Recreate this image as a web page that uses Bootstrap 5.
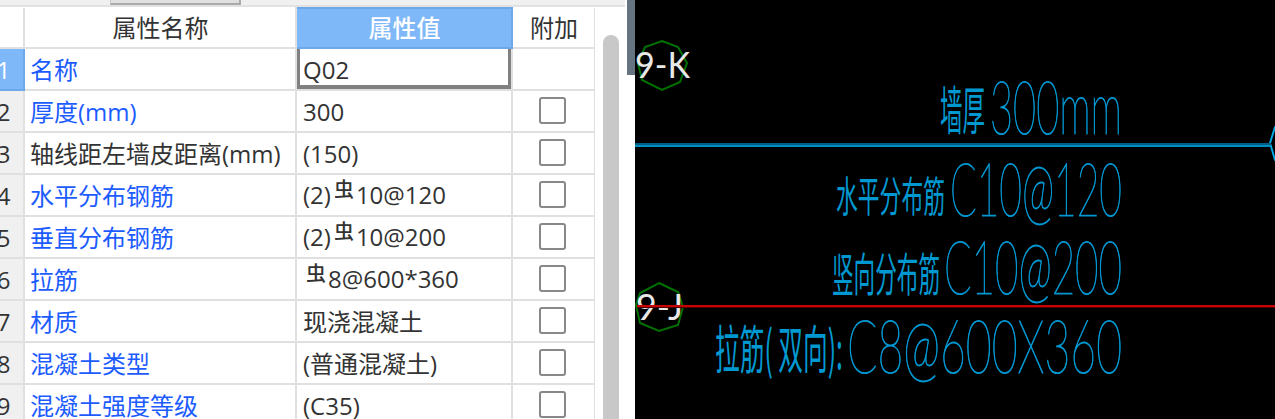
<!DOCTYPE html>
<html lang="zh-CN">
<head>
    <meta charset="UTF-8">
    <meta name="viewport" content="width=device-width, initial-scale=1.0">
    <title>属性编辑</title>
    <link href="https://cdn.jsdelivr.net/npm/bootstrap@5.3.0/dist/css/bootstrap.min.css" rel="stylesheet">
    <style>
        html, body { height: 419px; overflow: hidden; background: #000; }
        body { font-family: "Open Sans", "Noto Sans CJK SC", sans-serif; }
        .app-shell { height: 419px; }
        .prop-panel { width: 635px; background: #fff; position: relative; overflow: hidden; }
        .tab-strip { height: 7px; background: #f0f0f0; border-bottom: 2px solid #e2e2e2; padding-left: 110px; }
        .tab-strip-item { width: 131px; height: 5px; background: #dfdfdf; border-right: 2px solid #aaa; border-left: 1px solid #ccc; border-bottom: 2px solid #aaa; }
        .grid-wrap { width: 595px; overflow: hidden; }
        .prop-grid { width: 611px; margin: 0 0 0 -16px; table-layout: fixed; font-size: 24px; color: #333; border-collapse: collapse; }
        .prop-grid th, .prop-grid td { height: 42px; padding: 2px 0 0 6px; border: 2px solid #e0e0e0; border-top: 0; line-height: 30px; vertical-align: middle; font-weight: 400; white-space: nowrap; background: #fff; color: #333; box-shadow: none; }
        .prop-grid thead th { height: 40px; text-align: center; padding: 0 0 0 1px; }
        .prop-grid .row-no { background: #f0f0f0; text-align: center; padding: 2px 0 0; border-left: 0; }
        .prop-grid .row-no.is-current { background: #7fb8f9; color: #fff; border-color: #6fa8e8; }
        .prop-grid .prop-name { color: #1c5cff; padding-left: 5px; }
        .prop-grid td.plain-name { padding-left: 5px; }
        .prop-grid th.value-head { background: #7fb8f9; color: #fff; font-weight: 500; border: 2px solid #6fa8e8; }
        .prop-grid td.value-edit { box-shadow: inset 3px 0 0 #808080, inset -3px 0 0 #808080, inset 0 -4px 0 #808080; }
        .col-no { width: 40px; }
        .col-name { width: 272px; }
        .col-value { width: 216px; }
        .col-extra { width: 83px; }
        .prop-grid .extra-cell { text-align: center; padding: 0 2px 0 0; }
        .prop-grid .form-check-input { width: 27px; height: 27px; margin: 0 0 4px; border: 2px solid #888; border-radius: 3px; vertical-align: middle; float: none; }
        .rebar-mark { font-size: 20px; font-weight: 500; position: relative; top: -7px; margin: 0 2px 0 3px; }
        .scroll-track { width: 30px; padding: 28px 0 0 8px; }
        .scroll-thumb { width: 16px; height: 400px; background: #c8c8c8; border-radius: 8px 8px 0 0; }
        .panel-edge { width: 10px; padding-left: 2px; background: #fff; }
        .panel-edge-dark { height: 75px; background: #667380; }
        .cad-view { width: 640px; height: 419px; background: #000; display: block; }
        .cad-latin { font-family: "Lato", "Roboto", sans-serif; font-weight: 100; fill: #00a8e8; stroke: #0096d0; stroke-width: 1.2px; }
        .cad-cjk { font-family: "Noto Sans CJK SC", sans-serif; font-weight: 400; fill: #0098d0; }
        .axis-label { font-family: "Lato", "Liberation Sans", sans-serif; font-weight: 400; font-size: 36px; fill: #e8e8e8; }
    </style>
</head>
<body>
    <div class="app-shell d-flex">
        <div class="prop-panel d-flex">
            <div class="flex-grow-1">
                <div class="tab-strip"><div class="tab-strip-item"></div></div>
                <div class="d-flex">
                    <div class="grid-wrap">
                        <table class="prop-grid">
                            <colgroup>
                                <col class="col-no"><col class="col-name"><col class="col-value"><col class="col-extra">
                            </colgroup>
                            <thead>
                                <tr>
                                    <th class="row-no bg-white"></th>
                                    <th>属性名称</th>
                                    <th class="value-head">属性值</th>
                                    <th>附加</th>
                                </tr>
                            </thead>
                            <tbody>
                                <tr>
                                    <td class="row-no is-current">1</td>
                                    <td class="prop-name">名称</td>
                                    <td class="value-edit">Q02</td>
                                    <td class="extra-cell"></td>
                                </tr>
                                <tr>
                                    <td class="row-no">2</td>
                                    <td class="prop-name">厚度(mm)</td>
                                    <td>300</td>
                                    <td class="extra-cell"><input class="form-check-input" type="checkbox"></td>
                                </tr>
                                <tr>
                                    <td class="row-no">3</td>
                                    <td class="plain-name">轴线距左墙皮距离(mm)</td>
                                    <td>(150)</td>
                                    <td class="extra-cell"><input class="form-check-input" type="checkbox"></td>
                                </tr>
                                <tr>
                                    <td class="row-no">4</td>
                                    <td class="prop-name">水平分布钢筋</td>
                                    <td>(2)<span class="rebar-mark">虫</span>10@120</td>
                                    <td class="extra-cell"><input class="form-check-input" type="checkbox"></td>
                                </tr>
                                <tr>
                                    <td class="row-no">5</td>
                                    <td class="prop-name">垂直分布钢筋</td>
                                    <td>(2)<span class="rebar-mark">虫</span>10@200</td>
                                    <td class="extra-cell"><input class="form-check-input" type="checkbox"></td>
                                </tr>
                                <tr>
                                    <td class="row-no">6</td>
                                    <td class="prop-name">拉筋</td>
                                    <td><span class="rebar-mark">虫</span>8@600*360</td>
                                    <td class="extra-cell"><input class="form-check-input" type="checkbox"></td>
                                </tr>
                                <tr>
                                    <td class="row-no">7</td>
                                    <td class="prop-name">材质</td>
                                    <td>现浇混凝土</td>
                                    <td class="extra-cell"><input class="form-check-input" type="checkbox"></td>
                                </tr>
                                <tr>
                                    <td class="row-no">8</td>
                                    <td class="prop-name">混凝土类型</td>
                                    <td>(普通混凝土)</td>
                                    <td class="extra-cell"><input class="form-check-input" type="checkbox"></td>
                                </tr>
                                <tr>
                                    <td class="row-no">9</td>
                                    <td class="prop-name">混凝土强度等级</td>
                                    <td>(C35)</td>
                                    <td class="extra-cell"><input class="form-check-input" type="checkbox"></td>
                                </tr>
                            </tbody>
                        </table>
                    </div>
                    <div class="scroll-track"><div class="scroll-thumb"></div></div>
                </div>
            </div>
            <div class="panel-edge"><div class="panel-edge-dark"></div></div>
        </div>

        <svg class="cad-view" viewBox="635 0 640 419" xmlns="http://www.w3.org/2000/svg">
            <!-- axis bubbles -->
            <polygon points="662,41 678,47 687,63 680,82 662,90 642,80 638,63 645,47" fill="none" stroke="#007000" stroke-width="2"/>
            <polygon points="659,283 678,292 683,307 678,325 659,331 640,323 636,305 640,293" fill="none" stroke="#007000" stroke-width="2"/>
            <polygon points="1285,125 1275,127 1270,143 1275,160 1285,162" fill="none" stroke="#00a8e8" stroke-width="2"/>
            <text class="axis-label" x="635" y="78" textLength="55" lengthAdjust="spacingAndGlyphs">9-K</text>
            <text class="axis-label" x="636" y="320" textLength="47" lengthAdjust="spacingAndGlyphs">9-J</text>

            <!-- axis lines -->
            <rect x="635" y="143" width="636" height="2" fill="#005f80"/>
            <rect x="635" y="145" width="636" height="2" fill="#0090c4"/>
            <rect x="637" y="305" width="638" height="2" fill="#c80000"/>
            <rect x="637" y="307" width="638" height="1" fill="#500000"/>

            <!-- wall notes -->
            <text class="cad-cjk" x="940" y="130" font-size="52" textLength="45" lengthAdjust="spacingAndGlyphs">墙厚</text>
            <text class="cad-latin" x="990" y="134" font-size="75" textLength="132" lengthAdjust="spacingAndGlyphs">300mm</text>
            <text class="cad-cjk" x="836" y="212" font-size="42" textLength="109" lengthAdjust="spacingAndGlyphs">水平分布筋</text>
            <text class="cad-latin" x="950" y="216" font-size="75" textLength="172" lengthAdjust="spacingAndGlyphs">C10@120</text>
            <text class="cad-cjk" x="832" y="291" font-size="46" textLength="108" lengthAdjust="spacingAndGlyphs">竖向分布筋</text>
            <text class="cad-latin" x="944" y="294" font-size="75" textLength="178" lengthAdjust="spacingAndGlyphs">C10@200</text>
            <text class="cad-cjk" x="715" y="369" font-size="52" textLength="128" lengthAdjust="spacingAndGlyphs">拉筋( 双向):</text>
            <text class="cad-latin" x="847" y="373" font-size="75" textLength="275" lengthAdjust="spacingAndGlyphs">C8@600X360</text>
        </svg>
    </div>

    <script src="https://cdn.jsdelivr.net/npm/bootstrap@5.3.0/dist/js/bootstrap.bundle.min.js"></script>
</body>
</html>
